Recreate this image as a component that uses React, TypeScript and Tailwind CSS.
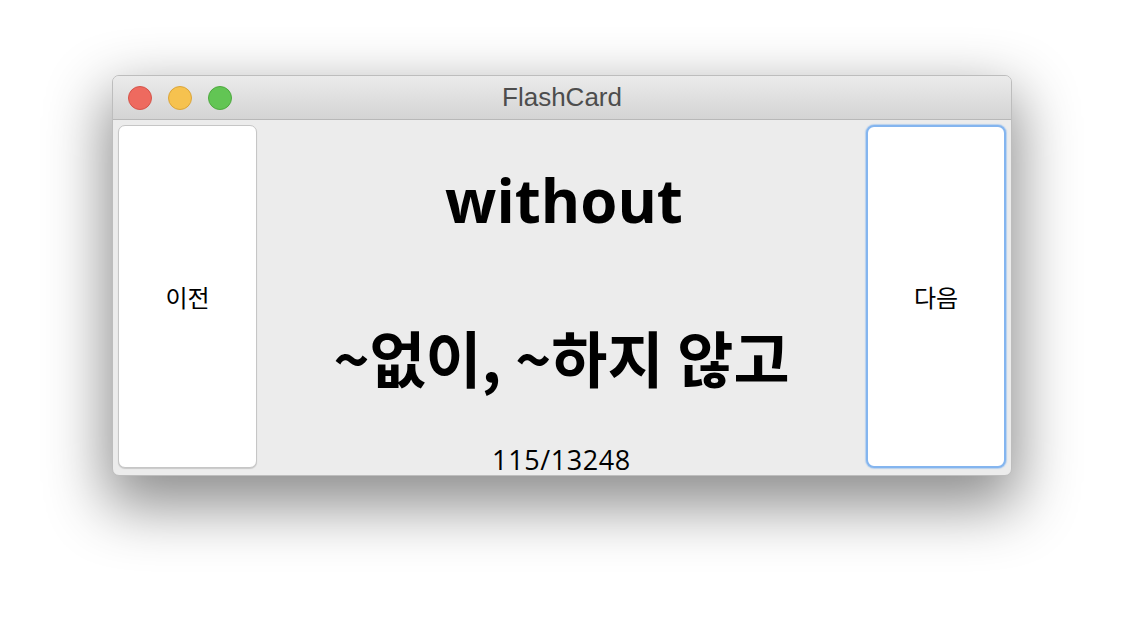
export default function App() {
  return (
    <div className="w-[1124px] h-[624px] bg-white pt-[75px] pl-[112px] font-['Noto_Sans','Noto_Sans_CJK_KR',sans-serif]">
      {/* Window */}
      <div className="w-[900px] h-[401px] rounded-[7px] border border-[#bdbdbd] bg-[#ececec] flex flex-col shadow-[0_24px_60px_6px_rgba(0,0,0,0.45)]">
        {/* Title bar */}
        <div className="relative h-[44px] shrink-0 flex items-center rounded-t-[6px] border-b border-[#b8b8b8] bg-gradient-to-b from-[#ebebeb] to-[#d4d4d4]">
          <div className="flex gap-[16px] pl-[15px]">
            <span className="w-[24px] h-[24px] rounded-full bg-[#ee6a5f] border border-[#d5544a]" />
            <span className="w-[24px] h-[24px] rounded-full bg-[#f6c24f] border border-[#dba53a]" />
            <span className="w-[24px] h-[24px] rounded-full bg-[#62c554] border border-[#4ea93f]" />
          </div>
          <div className="absolute inset-0 flex items-center justify-center text-[26px] text-[#4d4d4d] font-['Liberation_Sans',sans-serif]">
            FlashCard
          </div>
        </div>

        {/* Content */}
        <div className="flex-1 flex px-[5px] pt-[5px] rounded-b-[6px]">
          <button className="w-[139px] mb-[7px] shrink-0 rounded-[7px] bg-white border border-[#c6c6c6] shadow-[0_1px_1px_rgba(0,0,0,0.15)] flex items-center justify-center text-[24px] text-black font-['Noto_Sans_CJK_KR',sans-serif]">
            이전
          </button>

          <div className="flex-1 flex flex-col items-center">
            <div className="mt-[40px] text-[60px] leading-[70px] font-bold text-black font-['Open_Sans','Noto_Sans_CJK_KR',sans-serif] pl-[5px]">
              without
            </div>
            <div className="mt-[90px] text-[61px] leading-[64px] font-bold text-black font-['Noto_Sans_CJK_KR',sans-serif]">
              ~없이, ~하지 않고
            </div>
            <div className="mt-auto text-[27px] leading-[31px] tracking-[0.6px] text-black font-['Open_Sans',sans-serif]">
              115/13248
            </div>
          </div>

          <button className="w-[140px] mb-[7px] shrink-0 rounded-[8px] bg-white border-[2px] border-[#84b5ef] shadow-[0_0_1px_1px_rgba(132,181,239,0.5)] flex items-center justify-center text-[24px] text-black font-['Noto_Sans_CJK_KR',sans-serif]">
            다음
          </button>
        </div>
      </div>
    </div>
  );
}
